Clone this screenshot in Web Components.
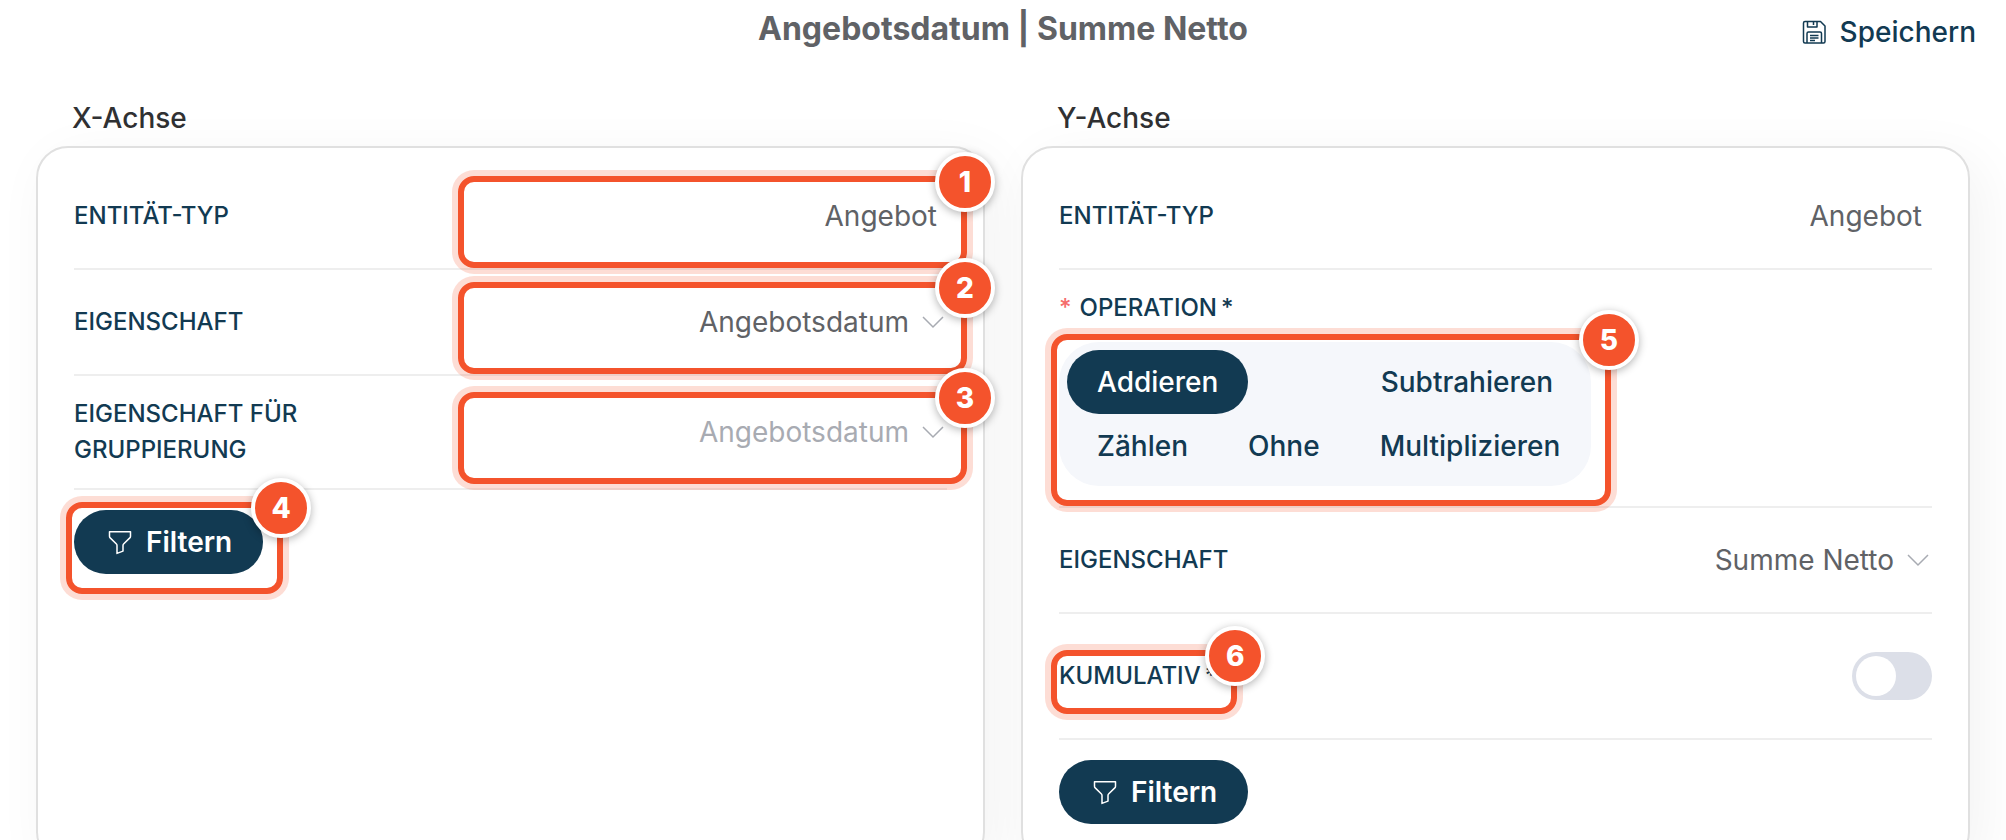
<!DOCTYPE html>
<html lang="de">
<head>
<meta charset="utf-8">
<title>Angebotsdatum | Summe Netto</title>
<style>
  body {
    margin: 0;
    overflow: hidden;
    background: #fff;
    color: #606266;
    font: 400 28px/36px Inter, "Liberation Sans", sans-serif;
  }
</style>
</head>
<body>
<chart-editor>
  <span slot="title">Angebotsdatum | Summe Netto</span>
  <icon-button slot="action" icon="save" variant="text">Speichern</icon-button>

  <axis-card heading="X-Achse">
    <form-row label="Entität-Typ">
      <step-mark number="1"><static-value>Angebot</static-value></step-mark>
    </form-row>
    <form-row>
      <select-field label="Eigenschaft" value="Angebotsdatum" number="2"></select-field>
    </form-row>
    <form-row>
      <select-field label="Eigenschaft für Gruppierung" value="Angebotsdatum" number="3" placeholder></select-field>
    </form-row>
    <step-mark slot="footer" number="4"><icon-button icon="filter">Filtern</icon-button></step-mark>
  </axis-card>

  <axis-card heading="Y-Achse">
    <form-row label="Entität-Typ"><static-value>Angebot</static-value></form-row>
    <operation-group legend="Operation" number="5"></operation-group>
    <form-row><select-field label="Eigenschaft" value="Summe Netto"></select-field></form-row>
    <toggle-row label="Kumulativ" number="6"></toggle-row>
    <icon-button slot="footer" icon="filter">Filtern</icon-button>
  </axis-card>
</chart-editor>

<script>
const LABEL = `
  .label {
    color: #123a52;
    font-size: 24px;
    font-weight: 500;
    line-height: 36px;
    text-transform: uppercase;
  }
  .star { margin-left: 4px; }
`;

const ICONS = {
  filter: `<path d="M3.5 3.8h21v4.4q0 1-.7 1.7l-6 5.8q-.8.8-.8 1.8v5.600l-6 2.300v-7.900q0-1-.8-1.800l-6-5.800q-.7-.7-.7-1.700z"/>`,
  save: `<path d="M5 3.500h15.500l4.500 4.500v15.500q0 1.500-1.500 1.500h-18.500q-1.500 0-1.500-1.500v-18.500q0-1.500 1.500-1.500z"/>
    <path d="M7.500 3.500v5.500h9.500v-5.500M13.500 3.500v3.500M7 25v-9.500q0-1.500 1.500-1.500h11.500q1.500 0 1.500 1.500v9.500M10 17.500h8.500M10 20h8.500M10 22.500h5"/>`,
};

class ChartEditor extends HTMLElement {
  constructor() {
    super();
    this.attachShadow({ mode: "open" }).innerHTML = `
      <style>
        :host { display: block; padding: 0 36px; }
        header {
          display: grid;
          grid-template-columns: 1fr auto 1fr;
          align-items: start;
          padding-bottom: 36px;
        }
        h1 {
          grid-column: 2;
          margin: 0;
          padding-top: 9px;
          font-size: 32px;
          line-height: 40px;
          font-weight: 700;
        }
        slot[name="action"] { display: flex; justify-content: flex-end; margin-right: -6px; }
        main { display: grid; grid-template-columns: 1fr 1fr; gap: 36px; }
      </style>
      <header>
        <h1><slot name="title"></slot></h1>
        <slot name="action"></slot>
      </header>
      <main><slot></slot></main>
    `;
  }
}

class AxisCard extends HTMLElement {
  constructor() {
    super();
    this.attachShadow({ mode: "open" });
  }

  connectedCallback() {
    this.shadowRoot.innerHTML = `
      <style>
        :host { display: flex; flex-direction: column; }
        h2 {
          margin: 0 36px 10px;
          color: #303133;
          font-size: 28px;
          line-height: 36px;
          font-weight: 500;
        }
        section {
          flex: 1;
          min-height: 80vh;
          padding: 16px 36px 26px;
          border: 2px solid #e0e0e0;
          border-radius: 32px;
          background: #fff;
          box-shadow: 12px 12px 56px rgba(0, 0, 0, .05);
        }
        footer { display: flex; padding-top: 20px; }
      </style>
      <h2>${this.getAttribute("heading")}</h2>
      <section>
        <slot></slot>
        <footer><slot name="footer"></slot></footer>
      </section>
    `;
  }
}

class FormRow extends HTMLElement {
  constructor() {
    super();
    this.attachShadow({ mode: "open" });
  }

  connectedCallback() {
    const label = this.getAttribute("label");
    this.shadowRoot.innerHTML = `
      <style>
        ${LABEL}
        :host {
          display: flex;
          align-items: center;
          min-height: 64px;
          padding: 20px 0;
          border-bottom: 2px solid #eee;
        }
        .label { flex: 0 0 392px; }
        slot { display: block; flex: 1; }
      </style>
      ${label ? `<span class="label">${label}</span>` : ""}
      <slot></slot>
    `;
  }
}

class StaticValue extends HTMLElement {
  constructor() {
    super();
    this.attachShadow({ mode: "open" }).innerHTML = `
      <style>
        :host { display: block; padding: 0 10px; line-height: 64px; text-align: right; }
      </style>
      <slot></slot>
    `;
  }
}

class SelectField extends HTMLElement {
  constructor() {
    super();
    this.attachShadow({ mode: "open" });
  }

  connectedCallback() {
    const number = this.getAttribute("number");
    const field = `
      <div class="field">
        <select id="field"><option>${this.getAttribute("value")}</option></select>
        <svg viewBox="0 0 28 28" aria-hidden="true"><path d="M4 9l10 10 10-10"/></svg>
      </div>
    `;
    this.shadowRoot.innerHTML = `
      <style>
        ${LABEL}
        :host { display: flex; align-items: center; }
        .label { box-sizing: border-box; flex: 0 0 392px; padding-right: 100px; }
        .field, step-mark { flex: 1; }
        .field { display: grid; align-items: center; }
        select, svg { grid-area: 1 / 1; }
        select {
          appearance: none;
          width: 100%;
          height: 64px;
          padding: 0 38px 0 0;
          border: 0;
          background: none;
          color: inherit;
          font: inherit;
          text-align-last: right;
        }
        :host([placeholder]) select { color: #a8abb2; }
        svg {
          justify-self: end;
          width: 28px;
          height: 28px;
          fill: none;
          stroke: #a8abb2;
          stroke-width: 1.5;
          pointer-events: none;
        }
      </style>
      <label class="label" for="field">${this.getAttribute("label")}</label>
      ${number ? `<step-mark number="${number}">${field}</step-mark>` : field}
    `;
  }
}

// nummerierte Hervorhebung rund um den Inhalt
class StepMark extends HTMLElement {
  constructor() {
    super();
    this.attachShadow({ mode: "open" });
  }

  connectedCallback() {
    this.shadowRoot.innerHTML = `
      <style>
        :host { display: block; position: relative; }
        .frame {
          position: absolute;
          inset: -8px -20px -20px -8px;
          border: 6px solid #f4532c;
          border-radius: 16px;
          box-shadow: 0 0 0 6px rgba(244, 83, 44, .2);
          pointer-events: none;
        }
        .badge {
          position: absolute;
          top: -30px;
          right: -34px;
          width: 52px;
          height: 52px;
          border: 4px solid #fff;
          border-radius: 50%;
          background: #f4532c;
          box-shadow: 0 2px 8px rgba(0, 0, 0, .3);
          color: #fff;
          font-size: 28px;
          line-height: 52px;
          font-weight: 800;
          text-align: center;
        }
      </style>
      <slot></slot>
      <div class="frame"><span class="badge">${this.getAttribute("number")}</span></div>
    `;
  }
}

class IconButton extends HTMLElement {
  constructor() {
    super();
    this.attachShadow({ mode: "open" });
  }

  connectedCallback() {
    this.shadowRoot.innerHTML = `
      <style>
        :host { display: block; }
        button {
          display: flex;
          align-items: center;
          gap: 12px;
          height: 64px;
          padding: 0 31px 0 32px;
          border: 0;
          border-radius: 32px;
          background: #123a52;
          color: #fff;
          font: inherit;
          font-weight: 600;
        }
        :host([variant="text"]) button {
          padding: 0;
          background: none;
          color: #123a52;
          font-weight: 500;
        }
        svg {
          width: 28px;
          height: 28px;
          fill: none;
          stroke: currentColor;
          stroke-width: 1.5;
          stroke-linejoin: round;
        }
      </style>
      <button type="button">
        <svg viewBox="0 0 28 28" aria-hidden="true">${ICONS[this.getAttribute("icon")]}</svg>
        <slot></slot>
      </button>
    `;
  }
}

class OperationGroup extends HTMLElement {
  constructor() {
    super();
    this.attachShadow({ mode: "open" });
  }

  connectedCallback() {
    const options = ["Addieren", "Subtrahieren", "Zählen", "Ohne", "Multiplizieren"];
    this.shadowRoot.innerHTML = `
      <style>
        ${LABEL}
        :host { display: block; padding: 20px 0; border-bottom: 2px solid #eee; }
        .label { margin-bottom: 16px; }
        .required { margin-right: 8px; color: #f56c6c; }
        step-mark { width: 532px; }
        .group {
          display: flex;
          flex-wrap: wrap;
          padding: 8px 0 8px 8px;
          border-radius: 40px;
          background: #f5f7fb;
        }
        .option {
          padding: 0 30px;
          border-radius: 32px;
          color: #123a52;
          font-weight: 500;
          line-height: 64px;
        }
        .option:nth-child(2) { margin: 0 8px 0 auto; }
        .option:has(:checked) { background: #123a52; color: #fff; }
        input { position: absolute; opacity: 0; }
      </style>
      <div class="label" id="legend"><span class="required">*</span>${this.getAttribute("legend")}<span class="star">*</span></div>
      <step-mark number="${this.getAttribute("number")}">
        <div class="group" role="radiogroup" aria-labelledby="legend">
          ${options.map((name, i) => `<label class="option"><input type="radio" name="operation"${i ? "" : " checked"}>${name}</label>`).join("")}
        </div>
      </step-mark>
    `;
  }
}

class ToggleRow extends HTMLElement {
  constructor() {
    super();
    this.attachShadow({ mode: "open" });
  }

  connectedCallback() {
    this.shadowRoot.innerHTML = `
      <style>
        ${LABEL}
        :host {
          display: flex;
          align-items: center;
          justify-content: space-between;
          min-height: 84px;
          padding: 20px 0;
          border-bottom: 2px solid #eee;
        }
        .label { display: block; }
        input {
          appearance: none;
          display: flex;
          width: 80px;
          height: 48px;
          margin: 0;
          padding: 4px;
          border-radius: 24px;
          background: #dcdfe8;
        }
        input::before {
          content: "";
          width: 40px;
          height: 40px;
          border-radius: 50%;
          background: #fff;
        }
        input:checked { justify-content: flex-end; background: #123a52; }
      </style>
      <step-mark number="${this.getAttribute("number")}">
        <label class="label" for="toggle">${this.getAttribute("label")}<span class="star">*</span></label>
      </step-mark>
      <input id="toggle" type="checkbox" role="switch">
    `;
  }
}

customElements.define("chart-editor", ChartEditor);
customElements.define("axis-card", AxisCard);
customElements.define("form-row", FormRow);
customElements.define("static-value", StaticValue);
customElements.define("select-field", SelectField);
customElements.define("step-mark", StepMark);
customElements.define("icon-button", IconButton);
customElements.define("operation-group", OperationGroup);
customElements.define("toggle-row", ToggleRow);
</script>
</body>
</html>
